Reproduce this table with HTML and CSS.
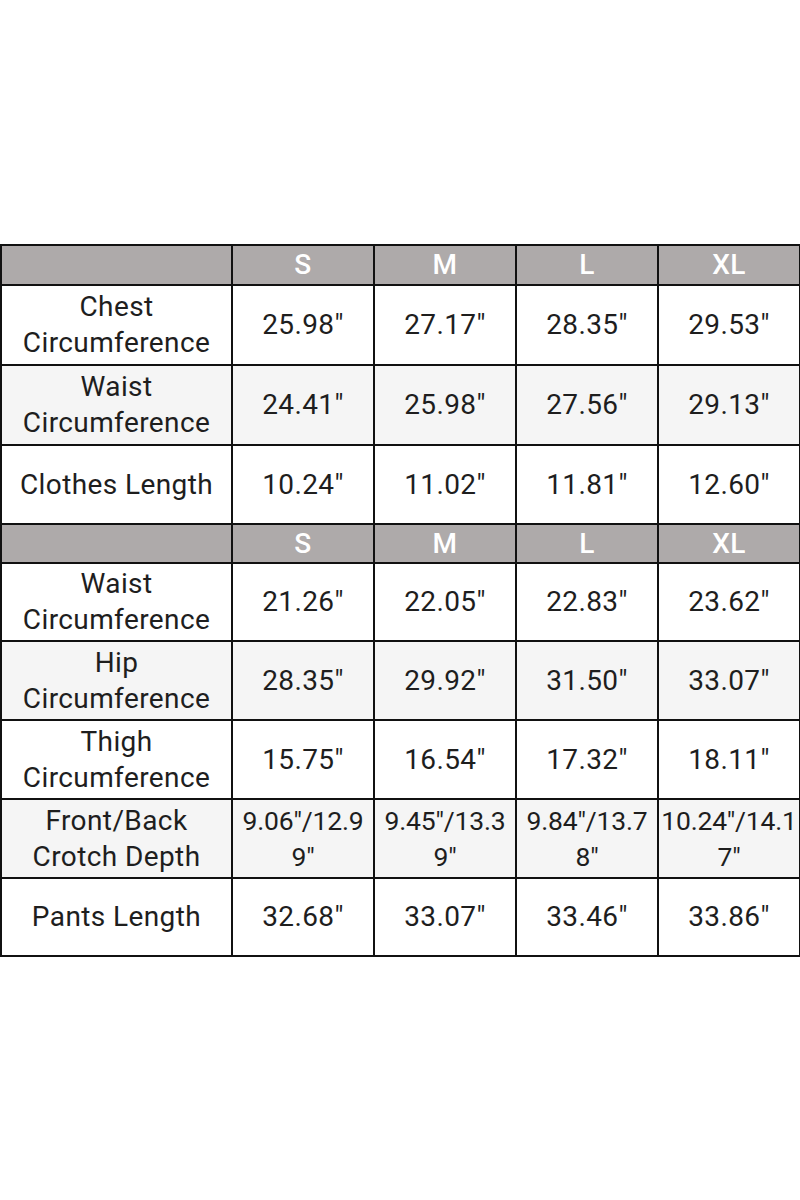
FILE: index.html
```html
<!DOCTYPE html>
<html>
<head>
<meta charset="utf-8">
<link rel="stylesheet" href="styles.css">
</head>
<body>
<div class="page">
<table class="sizes">
  <colgroup><col class="c-label"><col class="c-val"><col class="c-val"><col class="c-val"><col class="c-val"></colgroup>
  <tr class="head h40"><td></td><td>S</td><td>M</td><td>L</td><td>XL</td></tr>
  <tr class="h80"><td>Chest<br>Circumference</td><td>25.98"</td><td>27.17"</td><td>28.35"</td><td>29.53"</td></tr>
  <tr class="alt h80"><td>Waist<br>Circumference</td><td>24.41"</td><td>25.98"</td><td>27.56"</td><td>29.13"</td></tr>
  <tr class="h79"><td>Clothes Length</td><td>10.24"</td><td>11.02"</td><td>11.81"</td><td>12.60"</td></tr>
  <tr class="head h39"><td></td><td>S</td><td>M</td><td>L</td><td>XL</td></tr>
  <tr class="h78"><td>Waist<br>Circumference</td><td>21.26"</td><td>22.05"</td><td>22.83"</td><td>23.62"</td></tr>
  <tr class="alt h79"><td>Hip<br>Circumference</td><td>28.35"</td><td>29.92"</td><td>31.50"</td><td>33.07"</td></tr>
  <tr class="h79"><td>Thigh<br>Circumference</td><td>15.75"</td><td>16.54"</td><td>17.32"</td><td>18.11"</td></tr>
  <tr class="alt h79"><td>Front/Back<br>Crotch Depth</td><td class="tight">9.06"/12.9<br>9"</td><td class="tight">9.45"/13.3<br>9"</td><td class="tight">9.84"/13.7<br>8"</td><td class="tight">10.24"/14.1<br>7"</td></tr>
  <tr class="h78"><td>Pants Length</td><td>32.68"</td><td>33.07"</td><td>33.46"</td><td>33.86"</td></tr>
</table>
</div>
</body>
</html>
```
FILE: styles.css
```css
html, body { margin: 0; padding: 0; background: #fff; }
.page { padding-top: 244px; width: 800px; }
.sizes {
  border-collapse: collapse;
  width: 799px;
  table-layout: fixed;
  font-family: Roboto, "Liberation Sans", sans-serif;
  font-size: 28px;
  letter-spacing: 0.4px;
  line-height: 36px;
  color: #1e1e1e;
}
.c-label { width: 231px; }
.c-val { width: 142px; }
.sizes td {
  border: 2px solid #111;
  text-align: center;
  vertical-align: middle;
  padding: 0;
  white-space: nowrap;
  overflow: hidden;
}
.sizes td.tight { font-size: 26.5px; letter-spacing: -0.2px; }
.head td { background: #aeaaaa; color: #fff; font-weight: 500; }
.alt td { background: #f5f5f5; }
.h40 { height: 40px; }
.h39 { height: 39px; }
.h80 { height: 80px; }
.h79 { height: 79px; }
.h78 { height: 78px; }
```
